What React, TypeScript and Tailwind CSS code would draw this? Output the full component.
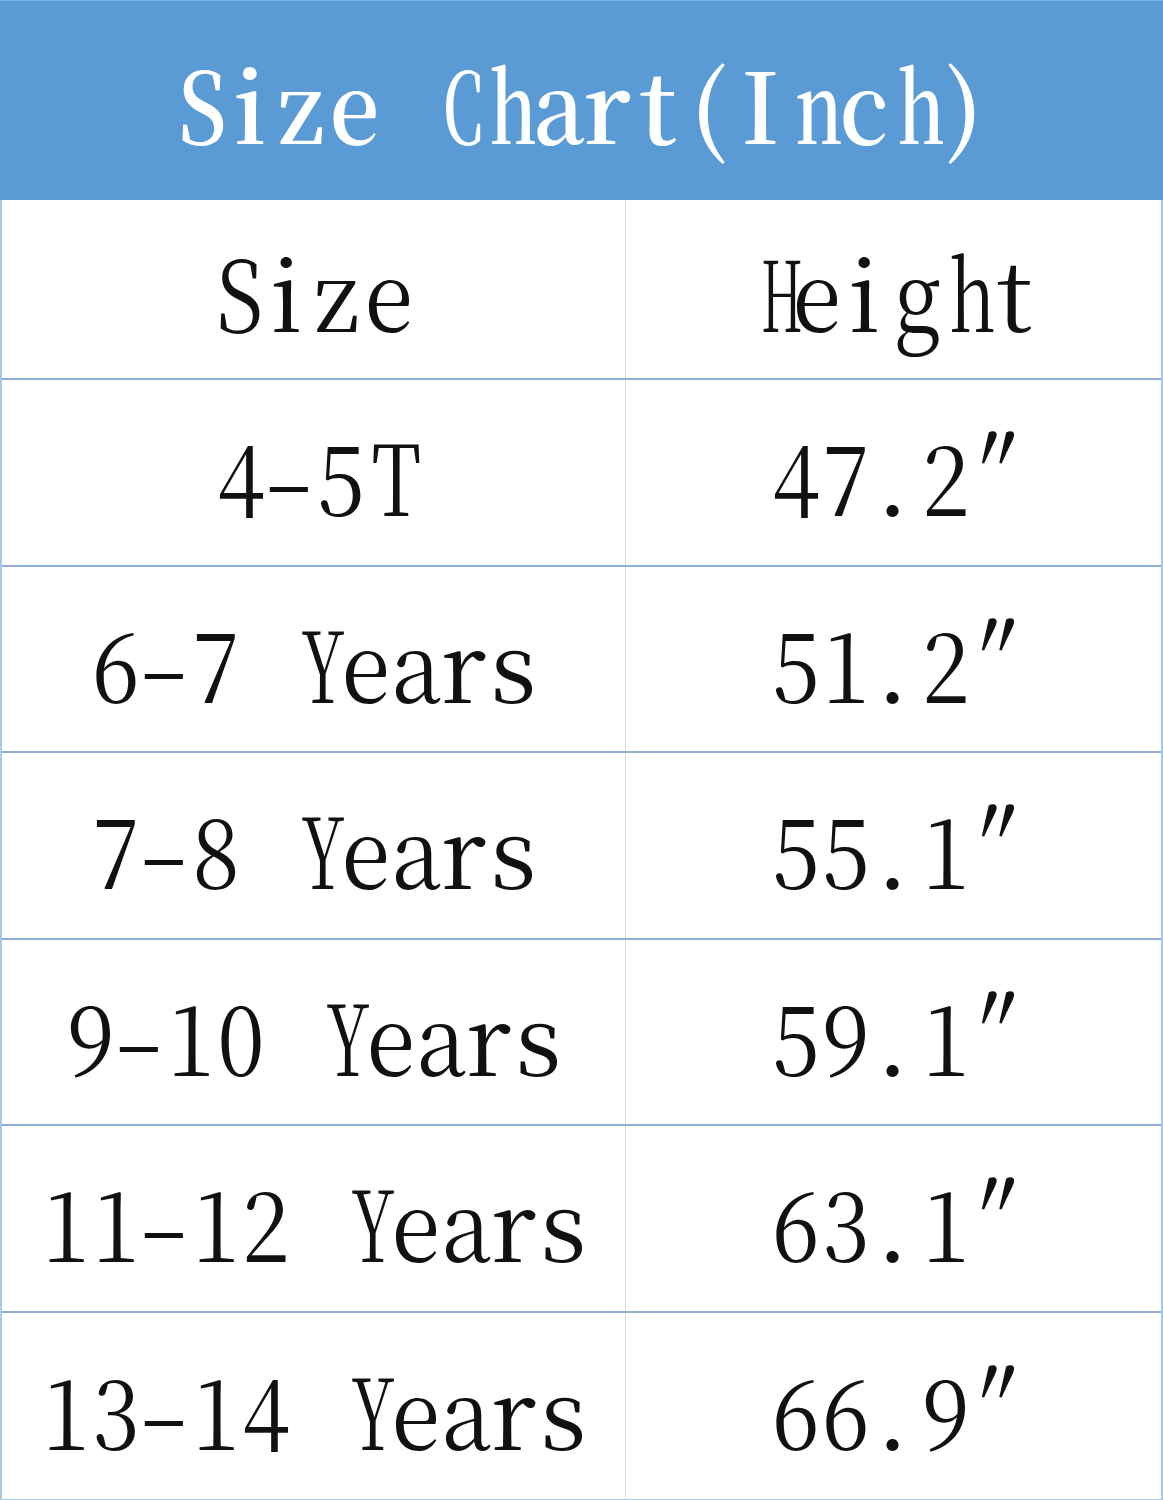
import React from "react";

const scaleFor: Record<string, string> = {
  S: "scale-x-[0.85]",
  C: "scale-x-[0.58]",
  H: "scale-x-[0.5]",
  T: "scale-x-[0.76]",
  Y: "scale-x-[0.66]",
  I: "scale-x-[0.95]",
  h: "scale-x-[0.72]",
  n: "scale-x-[0.72]",
  g: "scale-x-[0.85]",
  e: "scale-x-[0.9]",
  a: "scale-x-[0.92]",
  z: "scale-x-[0.95]",
  c: "scale-x-[0.9]",
  "-": "scale-x-[1.5]",
  "0": "scale-x-[0.88]",
  "1": "scale-x-[0.88]",
  "2": "scale-x-[0.88]",
  "3": "scale-x-[0.88]",
  "4": "scale-x-[0.88]",
  "5": "scale-x-[0.88]",
  "6": "scale-x-[0.88]",
  "7": "scale-x-[0.88]",
  "8": "scale-x-[0.88]",
  "9": "scale-x-[0.88]",
};

const cellFor: Record<string, string> = {
  ".": "text-left pl-[8px]",
  "″": "text-center pb-[12px] -skew-x-[10deg]",
};

function Mono({ text, cell }: { text: string; cell: string }) {
  return (
    <span className="inline-flex items-center">
      {[...text].map((ch, i) => (
        <span
          key={i}
          className={`inline-block ${cell} ${cellFor[ch] ?? "text-center"}`}
        >
          <span className={`inline-block ${scaleFor[ch] ?? "scale-x-100"}`}>
            {ch === " " ? "\u00a0" : ch}
          </span>
        </span>
      ))}
    </span>
  );
}

const rows: [string, string][] = [
  ["4-5T", "47.2″"],
  ["6-7 Years", "51.2″"],
  ["7-8 Years", "55.1″"],
  ["9-10 Years", "59.1″"],
  ["11-12 Years", "63.1″"],
  ["13-14 Years", "66.9″"],
];

export default function App() {
  return (
    <div className="w-[1163px] h-[1500px] bg-white overflow-hidden text-[#111] leading-none font-['Noto_Serif_CJK_SC','Liberation_Serif',serif]">
      <div className="h-[200px] bg-[#5b9bd5] border-t border-[#7fb1e0] flex items-center justify-center pt-[2px] text-white text-[98px] font-semibold">
        <Mono text="Size Chart(Inch)" cell="w-[51px]" />
      </div>
      <div className="border-l-2 border-r-2 border-b-2 border-[#a8c8e8]">
        <div className="flex h-[180px] border-b-2 border-[#8fafd6] text-[98px]">
          <div className="w-[624px] border-r border-[#d3d9e1] flex items-center justify-center pt-[2px] pr-[4px]">
            <Mono text="Size" cell="w-[50px]" />
          </div>
          <div className="flex-1 flex items-center justify-center pt-[2px] pr-[8px]">
            <Mono text="Height" cell="w-[50px]" />
          </div>
        </div>
        {rows.map(([s, h], i) => (
          <div
            key={i}
            className={`flex h-[186.5px] text-[98px] ${
              i < rows.length - 1 ? "border-b-2 border-[#8fafd6]" : ""
            }`}
          >
            <div className="w-[624px] border-r border-[#d3d9e1] flex items-center justify-center pt-[4px]">
              <Mono text={s} cell="w-[50px]" />
            </div>
            <div className="flex-1 flex items-center justify-center pt-[4px]">
              <Mono text={h} cell="w-[50px]" />
            </div>
          </div>
        ))}
      </div>
    </div>
  );
}
